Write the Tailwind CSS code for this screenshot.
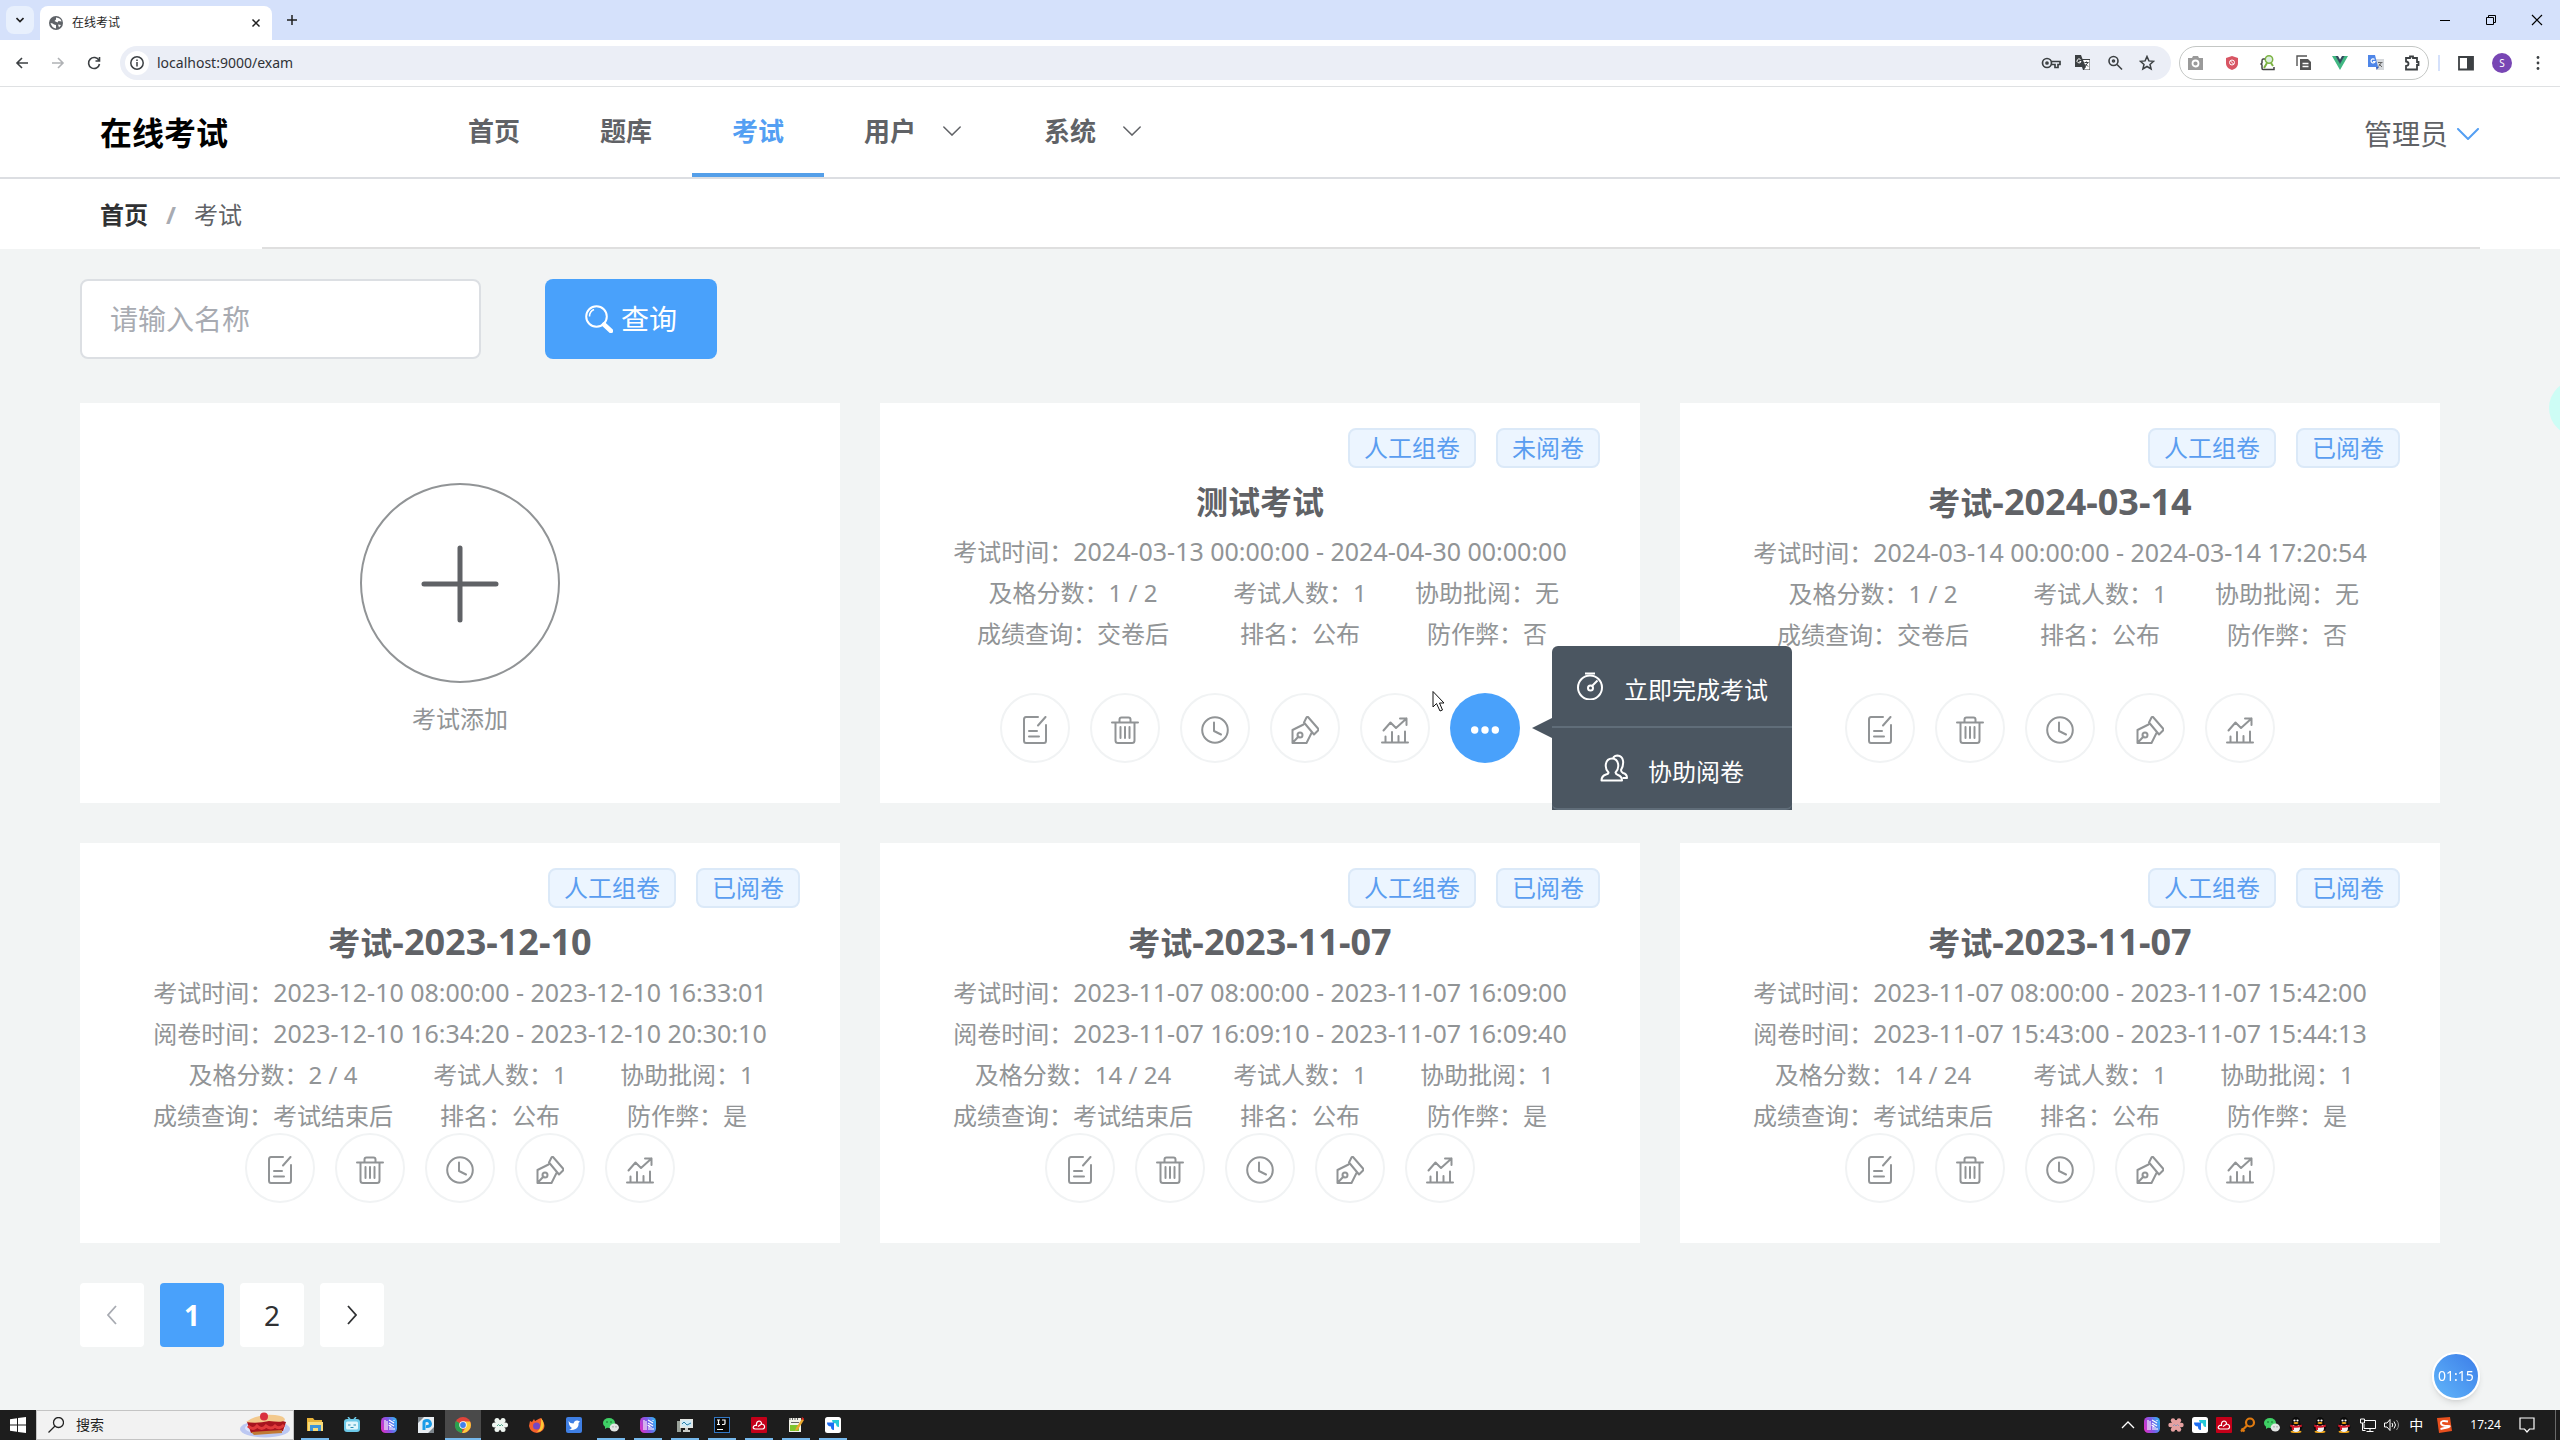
<!DOCTYPE html>
<html lang="zh-CN">
<head>
<meta charset="utf-8">
<title>在线考试</title>
<script src="https://cdn.jsdelivr.net/npm/@tailwindcss/browser@4"></script>
</head>
<body class="relative flex min-h-screen flex-col bg-[#f2f4f4] font-['Noto_Sans','Noto_Sans_CJK_SC',sans-serif] text-[#606266]">

<!-- shared icons -->
<svg class="absolute size-0" xmlns="http://www.w3.org/2000/svg" aria-hidden="true">
  <symbol id="i-edit" viewBox="0 0 28 28" fill="none" stroke="currentColor" stroke-width="2" stroke-linecap="round" stroke-linejoin="round"><path d="M17 1H5Q3 1 3 3.500V24.500Q3 27 5 27H23Q25 27 25 24.500V9"/><path d="M24.500 1L17 9.500M8 15h8M8 20.500h10" /></symbol>
  <symbol id="i-trash" viewBox="0 0 28 28" fill="none" stroke="currentColor" stroke-width="2" stroke-linecap="round" stroke-linejoin="round"><path d="M1 6.500h26M8.500 6V3.500Q8.500 1.500 10.500 1.500h7Q19.500 1.500 19.500 3.500V6M4.500 7V24.500Q4.500 27 7 27H21Q23.500 27 23.500 24.500V7M9.500 11v11M14 11v11M18.500 11v11"/></symbol>
  <symbol id="i-clock" viewBox="0 0 28 28" fill="none" stroke="currentColor" stroke-width="2" stroke-linecap="round" stroke-linejoin="round"><circle cx="14" cy="14" r="12.800"/><path d="M13 6.500V15L20 18.500"/></symbol>
  <symbol id="i-pen" viewBox="0 0 28 28" fill="none" stroke="currentColor" stroke-width="2" stroke-linecap="round" stroke-linejoin="round"><path d="M17 1L27 12.500Q27.500 13.500 27 14.500L23 18.500L13 6.500L15.500 1.500Q16.500 .5 17 1Z M12.500 8.500L1.500 14V27H15.500L20.500 17M1.500 27L7.500 20.500"/><circle cx="9" cy="19" r="2.500"/></symbol>
  <symbol id="i-chart" viewBox="0 0 28 28" fill="none" stroke="currentColor" stroke-width="2" stroke-linecap="round" stroke-linejoin="round"><path d="M1 26.500h26M4.500 26V20.500M11 26V16M17.500 26V20M24 26V15.500M2.500 14.500L9.500 6.500L15 12L25.500 2.500M19 2.500h6.500V9"/></symbol>
  <symbol id="i-down" viewBox="0 0 22 12" fill="none" stroke="currentColor" stroke-linecap="round"><path d="M1 1L11 11L21 1"/></symbol>
  <linearGradient id="gw" x1="0" y1=".6" x2="1" y2=".3"><stop offset="0" stop-color="#d633c8"/><stop offset=".5" stop-color="#7a5be8"/><stop offset="1" stop-color="#35b5f5"/></linearGradient>
  <symbol id="i-weave" viewBox="0 0 16 16"><rect width="16" height="16" rx="4.500" fill="url(#gw)"/><path d="M4 3v10M6 4v9M8 3l5 3M8 6l5 3M9 9v4M11 10v3M13 3v1M13 11v2M7.500 8l3 1.500" stroke="#fff" stroke-width="1.100"/></symbol>
  <symbol id="i-wechat" viewBox="0 0 16 16"><ellipse cx="6" cy="6" rx="6" ry="5" fill="#3fd065"/><path d="M2 9l0 3 3-2z" fill="#3fd065"/><ellipse cx="11.300" cy="10.500" rx="4.600" ry="4" fill="#e3e6e4"/><circle cx="4" cy="5" r=".8" fill="#14642c"/><circle cx="8" cy="5" r=".8" fill="#14642c"/><circle cx="10" cy="9.800" r=".6" fill="#777"/><circle cx="13" cy="9.800" r=".6" fill="#777"/></symbol>
  <symbol id="i-bird" viewBox="0 0 16 16"><rect width="16" height="16" rx="2.500" fill="#fff"/><path d="M7 3h7v7c-2 0-3-1-3-3.500C9 6.500 7 5.500 7 3z" fill="#25c9d8"/><path d="M2 5.500h7V13c-2.500 0-3-1.500-3-3.500C3.500 9.500 2 8 2 5.500z" fill="#1b6ef3"/></symbol>
  <symbol id="i-cloud" viewBox="0 0 16 16"><rect width="16" height="16" rx="1" fill="#c40019"/><path d="M4 12Q1.500 11.500 2.500 9.500Q3.500 8 5.500 8.500Q5 4.500 8 4Q10.500 4 10.500 7L7 9.500M10.500 7Q14 7.500 13.500 10.500Q13 12 11.500 12H4" fill="none" stroke="#fff" stroke-width="1.200"/></symbol>
  <symbol id="i-qq" viewBox="0 0 16 16"><ellipse cx="8" cy="14.800" rx="5.500" ry="1.200" fill="#f2a516"/><ellipse cx="8" cy="10" rx="6.500" ry="4.500" fill="#0b0b0b"/><ellipse cx="8" cy="11" rx="4" ry="4" fill="#f4f4f4"/><ellipse cx="8" cy="4.500" rx="4" ry="4.500" fill="#0b0b0b"/><circle cx="6.500" cy="3.500" r="1.100" fill="#fff"/><circle cx="9.500" cy="3.500" r="1.100" fill="#fff"/><ellipse cx="8" cy="6" rx="2.500" ry=".9" fill="#f2a516"/><path d="M2.500 7.500Q8 10 13.500 7.500L14 9.500Q8 12 2 9.500z M3.500 10h2.500v3h-2z" fill="#d3182a"/></symbol>
</svg>

<!-- browser frame -->
<div class="flex h-10 items-center bg-[#d5e1fb] px-1.5 text-[#1f1f1f]">
  <button class="grid size-7 place-items-center rounded-lg bg-[#e8f0fd]" aria-label="搜索标签页"><svg class="h-2 w-2" viewBox="0 0 8 8" fill="none" stroke="currentColor" stroke-width="1.600"><path d="M.5 2L4 5.500L7.500 2"/></svg></button>
  <div class="ml-1.5 flex h-[34px] w-58 items-center self-end rounded-t-lg bg-white px-2">
    <svg class="size-4" viewBox="0 0 16 16"><circle cx="8" cy="8" r="7" fill="#5f6368"/><path d="M2.500 8Q5 8 6 9.500L8 10v3.500Q4 13 2.500 8M8 2.500v2l-1.500 1.500 3 1.500 1-1.500 3 .5Q13 3 8 2.500M10 9.500l3 .5-2 2.500z" fill="#fff"/></svg>
    <span class="ml-2 flex-1 text-xs">在线考试</span>
    <button aria-label="关闭标签页"><svg class="size-4" viewBox="0 0 16 16" stroke="currentColor" stroke-width="1.500"><path d="M4.500 4.500l7 7M11.500 4.500l-7 7"/></svg></button>
  </div>
  <button class="ml-3" aria-label="新标签页"><svg class="size-4" viewBox="0 0 16 16" stroke="currentColor" stroke-width="1.500"><path d="M8 3v10M3 8h10"/></svg></button>
  <div class="ml-auto flex items-center gap-[30px] pr-[9px] text-black">
    <svg class="size-4" viewBox="0 0 16 16" stroke="currentColor"><path d="M3 8.500h10"/></svg>
    <svg class="size-4" viewBox="0 0 16 16" fill="none" stroke="currentColor"><path d="M3.500 5.500h7v7h-7zM5.500 5.500v-2h7v7h-2"/></svg>
    <svg class="size-4" viewBox="0 0 16 16" stroke="currentColor" stroke-width="1.200"><path d="M3 3l10 10M13 3L3 13"/></svg>
  </div>
</div>
<div class="flex h-[47px] items-center border-b border-[#dfe1e3] bg-white pr-3.5 pl-3.5 text-[#3c4043]">
  <svg class="size-4" viewBox="0 0 16 16" fill="none" stroke="currentColor" stroke-width="1.600"><path d="M14 8H3M8 3L3 8l5 5"/></svg>
  <svg class="ml-5 size-4 text-[#b0b2b5]" viewBox="0 0 16 16" fill="none" stroke="currentColor" stroke-width="1.600"><path d="M2 8h11M8 3l5 5-5 5"/></svg>
  <svg class="ml-5 size-4" viewBox="0 0 16 16" fill="none" stroke="currentColor" stroke-width="1.600"><path d="M13 5.500A5.500 5.500 0 1 0 13.500 9M13.500 2v4h-4"/></svg>
  <div class="ml-[18px] flex h-[34px] flex-1 items-center rounded-full bg-[#ebeef6] pr-4 pl-1">
    <div class="ml-px grid size-6 place-items-center rounded-full bg-white"><svg class="size-4" viewBox="0 0 16 16" fill="none" stroke="currentColor" stroke-width="1.500"><circle cx="8" cy="8" r="6.200"/><path d="M8 7v4.500M8 4.500V6"/></svg></div>
    <input type="text" value="localhost:9000/exam" aria-label="地址" class="ml-2 min-w-0 flex-1 bg-transparent text-sm text-[#303236] outline-none">
    <div class="flex items-center gap-4">
      <svg class="h-4 w-5 -mr-0.5" viewBox="0 0 20 16" fill="none" stroke="currentColor" stroke-width="1.700"><circle cx="6" cy="8" r="4.500"/><circle cx="6" cy="8" r="1"/><path d="M10.500 6.500H19v3h-2v3h-3v-3h-3.500"/></svg>
      <svg class="size-4" viewBox="0 0 16 16"><path d="M0 0h6l1.500 4H15v11H8l-1-3H0z" fill="#3c4043"/><path d="M8 5h6.500v9.500H9l2-2.500z" fill="#fff"/><path d="M9.500 7.500h4M11.500 6.500v1M13 7.500l-3 4M10.500 9l2.500 2.500" stroke="#3c4043" fill="none"/><path d="M5.500 4.500A2 2 0 1 0 6 6.500H4.500" stroke="#fff" fill="none"/></svg>
      <svg class="size-4" viewBox="0 0 16 16" fill="none" stroke="currentColor" stroke-width="1.600"><circle cx="6.500" cy="6" r="4.500"/><path d="M10 9.500l5 5"/><circle cx="6.500" cy="6" r="1"/></svg>
      <svg class="size-4" viewBox="0 0 16 16" fill="none" stroke="currentColor" stroke-width="1.500"><path d="M8 1.500l1.900 4.400 4.700.4-3.600 3.100 1.100 4.600L8 11.500 3.900 14 5 9.400 1.400 6.300l4.700-.4z"/></svg>
    </div>
  </div>
  <div class="ml-2 flex h-[34px] w-[250px] items-center gap-5 rounded-full border border-[#c4c7c5] px-2">
    <svg class="size-4" viewBox="0 0 16 16"><path d="M0 3h4l1-2h5l1 2h4v12H0z" fill="#9a9a9a"/><circle cx="7.500" cy="8.500" r="3" fill="none" stroke="#fff" stroke-width="1.800"/></svg>
    <svg class="size-4" viewBox="0 0 16 16"><path d="M8 1l6 2v5c0 4-3 6-6 7-3-1-6-3-6-7V3z" fill="#d85563"/><circle cx="8" cy="7.500" r="2.500" fill="none" stroke="#fff"/><path d="M6.500 6l3 3" stroke="#fff"/></svg>
    <svg class="size-4" viewBox="0 0 16 16" fill="none" stroke-width="1.500"><path d="M5 4H3Q2 4 2 6v2L1 9l1 1v3q0 1.500 1 1.500h11V12" stroke="#444"/><circle cx="9" cy="4.500" r="3.700" fill="#dceee0" stroke="#7cb342"/><path d="M7 8l-3 5M11 8l2 3" stroke="#7cb342" stroke-width="2"/></svg>
    <svg class="size-4" viewBox="0 0 16 16"><path d="M1 11V1h10" fill="none" stroke="#555" stroke-width="1.400"/><path d="M4 4h8l3 3v8H4z" fill="#555"/><path d="M6.500 8.500h6M6.500 11.500h6" stroke="#fff" stroke-width="1.300"/></svg>
    <svg class="size-4" viewBox="0 0 16 16"><path d="M0 1h4l4 7 4-7h4L8 15z" fill="#41b883"/><path d="M3.500 1H6l2 3.500L10 1h2.500L8 9z" fill="#34495e"/></svg>
    <svg class="size-4" viewBox="0 0 16 16"><path d="M7 4h9v11H9z" fill="#d5d8dc"/><path d="M0 0h7l3 12H0z" fill="#4f86e8"/><path d="M8 12h3l-2.500 3z" fill="#3b5fb5"/><path d="M6.500 4.500A2 2 0 1 0 7 6.500H5" stroke="#fff" fill="none" stroke-width="1.200"/><path d="M10 7.500h4.500M13.500 7.500l-3 4M11 9l3 3" stroke="#666" fill="none"/></svg>
    <svg class="size-4" viewBox="0 0 16 16" fill="none" stroke="#3c4043" stroke-width="1.800"><path d="M2 3h4V1.500h3V3h4v4h1.500v3H13v4.500H2V11q2.500-.3 2.500-2.300T2 6.500z"/></svg>
  </div>
  <span class="ml-[9px] h-4 w-0.5 bg-[#d5e1fb]"></span>
  <svg class="ml-[18px] size-4" viewBox="0 0 16 16"><path d="M1 2h14v12.500H1z" fill="none" stroke="#3c4043" stroke-width="1.800"/><path d="M9 2h6v12H9z" fill="#3c4043"/></svg>
  <span class="ml-[18px] grid size-5 place-items-center rounded-full bg-[#7846b4] text-[10px] text-white">S</span>
  <svg class="ml-[18px] size-4" viewBox="0 0 16 16" fill="currentColor"><circle cx="8" cy="2.500" r="1.400"/><circle cx="8" cy="8" r="1.400"/><circle cx="8" cy="13.500" r="1.400"/></svg>
</div>

<!-- site header -->
<header class="flex h-[92px] items-stretch border-b-2 border-[#dcdee2] bg-white pr-20 pl-[100px]">
  <h1 class="self-center pt-0.5 text-[32px] font-bold text-black">在线考试</h1>
  <nav class="ml-50 flex text-[26px] font-bold">
    <a href="#" class="flex items-center border-b-4 border-transparent px-10 pt-0.5">首页</a>
    <a href="#" class="flex items-center border-b-4 border-transparent px-10 pt-0.5">题库</a>
    <a href="#" class="flex items-center border-b-4 border-[#549fe9] px-10 pt-0.5 text-[#549ff3]">考试</a>
    <a href="#" class="flex w-45 items-center border-b-4 border-transparent pt-0.5 pl-10">用户<svg class="ml-[27px] h-2.5 w-[18px]" stroke-width="1.800"><use href="#i-down"/></svg></a>
    <a href="#" class="flex w-45 items-center border-b-4 border-transparent pt-0.5 pl-10">系统<svg class="ml-[27px] h-2.5 w-[18px]" stroke-width="1.800"><use href="#i-down"/></svg></a>
  </nav>
  <button class="ml-auto flex items-center gap-2 pt-1 text-[28px]">管理员<svg class="h-3 w-6 text-[#549ff3]" stroke-width="2"><use href="#i-down"/></svg></button>
</header>
<div class="flex h-[70px] items-stretch bg-white pr-20 pl-[100px] text-2xl">
  <nav class="flex items-center gap-[18px] pt-0.5" aria-label="面包屑"><a href="#" class="font-bold text-[#303133]">首页</a><span class="font-bold text-[#a8abb2]">/</span><span>考试</span></nav>
  <div class="ml-5 flex-1 border-b-2 border-[#dfdfdf]"></div>
</div>

<main class="flex-1 pt-[30px] pr-20 pb-10 pl-20">
  <form class="flex">
    <input type="text" placeholder="请输入名称" aria-label="名称" class="h-20 w-[401px] rounded-lg border-2 border-[#dcdfe3] bg-white px-7 text-[28px] placeholder:text-[#a8abb2]">
    <button type="button" class="ml-16 flex h-20 w-[172px] items-center justify-center gap-2 rounded-lg bg-[#49a1fb] text-[28px] text-white"><svg class="size-7" viewBox="0 0 28 28" fill="none" stroke="currentColor"><circle cx="11.500" cy="11.500" r="10.300" stroke-width="2"/><path d="M4.500 11.500A7.500 7.500 0 0 1 9 4.500" stroke-width="1.500"/><path d="M19 19.500L26 26" stroke-width="4.500" stroke-linecap="round"/></svg>查询</button>
  </form>

  <div class="mt-11 mr-10 grid grid-cols-3 gap-10 text-2xl text-[#919496]">
    <section class="flex h-[400px] flex-col items-center bg-white pt-20">
      <button class="grid size-50 place-items-center rounded-full border-2 border-[#919496] text-[#606266]" aria-label="考试添加"><svg class="size-20" viewBox="0 0 80 80" stroke="currentColor" stroke-width="5" stroke-linecap="round"><path d="M40 5v72M4 41h72"/></svg></button>
      <p class="mt-5">考试添加</p>
    </section>

    <section class="relative flex h-[400px] flex-col bg-white px-10 pt-[25px] pb-10">
      <div class="flex h-10 justify-end gap-5 text-[#5a9df0]"><span class="flex items-center rounded-lg border-2 border-[#dbe9f8] bg-[#ecf5ff] px-3.5">人工组卷</span><span class="flex items-center rounded-lg border-2 border-[#dbe9f8] bg-[#ecf5ff] px-3.5">未阅卷</span></div>
      <h2 class="mt-2.5 text-center text-[32px] leading-[48px] font-bold text-[#606266]">测试考试</h2>
      <div class="mt-[5px] min-h-0 flex-1 text-center leading-[41px]">
        <p class="whitespace-nowrap">考试时间：<time class="text-[25px]">2024-03-13 00:00:00 - 2024-04-30 00:00:00</time></p>
        <div class="grid grid-cols-[306fr_148fr_226fr] whitespace-nowrap"><span>及格分数：1 / 2</span><span>考试人数：1</span><span>协助批阅：无</span><span>成绩查询：交卷后</span><span>排名：公布</span><span>防作弊：否</span></div>
      </div>
      <div class="flex justify-center gap-5">
        <button class="grid size-[70px] place-items-center rounded-full border-2 border-[#f1f3f4] bg-white pt-1" aria-label="修改"><svg class="size-7"><use href="#i-edit"/></svg></button>
        <button class="grid size-[70px] place-items-center rounded-full border-2 border-[#f1f3f4] bg-white pt-1" aria-label="删除"><svg class="size-7"><use href="#i-trash"/></svg></button>
        <button class="grid size-[70px] place-items-center rounded-full border-2 border-[#f1f3f4] bg-white pt-1" aria-label="时间"><svg class="size-7"><use href="#i-clock"/></svg></button>
        <button class="grid size-[70px] place-items-center rounded-full border-2 border-[#f1f3f4] bg-white pt-1" aria-label="阅卷"><svg class="size-7"><use href="#i-pen"/></svg></button>
        <button class="grid size-[70px] place-items-center rounded-full border-2 border-[#f1f3f4] bg-white pt-1" aria-label="统计"><svg class="size-7"><use href="#i-chart"/></svg></button>
        <div class="relative">
          <button class="grid size-[70px] place-items-center rounded-full bg-[#49a1fb] pt-1 text-white" aria-label="更多"><svg class="size-7" viewBox="0 0 28 28" fill="currentColor"><circle cx="3.700" cy="14" r="3.700"/><circle cx="14" cy="14" r="3.700"/><circle cx="24.300" cy="14" r="3.700"/></svg></button>
          <div class="absolute -top-[47px] left-[102px] z-10 w-60 rounded-t-md bg-[#4b5661] text-white">
            <svg class="absolute top-[72px] -left-5 h-5 w-5" viewBox="0 0 20 20" fill="#4b5661"><path d="M20 0L0 10l20 10z"/></svg>
            <button class="flex h-[82px] w-full items-center justify-center gap-5 border-b-2 border-[#606d79] pt-2"><svg class="-mt-2 size-7" viewBox="0 0 28 28" fill="none" stroke="currentColor" stroke-width="2"><path d="M9 1.500h10"/><circle cx="14" cy="15.500" r="12"/><circle cx="14.500" cy="16" r="2.500"/><path d="M16 14l5.500-5.500"/></svg>立即完成考试</button>
            <button class="flex h-[82px] w-full items-center justify-center gap-5 rounded-b-md border-b-2 border-[#606d79] pt-2"><svg class="-mt-2 size-7" viewBox="0 0 28 28" fill="none" stroke="currentColor" stroke-width="2" stroke-linejoin="round"><path d="M8.500 18.500C4 14 5 4.500 12 4.500S20 14 15.500 18.500Q15.500 20 18 21Q22 22.500 22 26.500H1.500Q1.500 22 6 20.500Q8.500 20 8.500 18.500Z"/><path d="M13 4Q14.500 1.500 17.500 1.500C24 2 24.500 10 21 16Q21 18 23 19Q27 20 27 24H22.500"/></svg>协助阅卷</button>
          </div>
        </div>
      </div>
      <svg class="absolute top-[287px] left-[552px] h-[22px] w-[13px]" viewBox="0 0 13 22" fill="#fff" stroke="#111"><path d="M1 1.500V17l3.500-3.500L8 21l2.500-1L7.500 13H12z"/></svg>
    </section>

    <section class="flex h-[400px] flex-col bg-white px-10 pt-[25px] pb-10">
      <div class="flex h-10 justify-end gap-5 text-[#5a9df0]"><span class="flex items-center rounded-lg border-2 border-[#dbe9f8] bg-[#ecf5ff] px-3.5">人工组卷</span><span class="flex items-center rounded-lg border-2 border-[#dbe9f8] bg-[#ecf5ff] px-3.5">已阅卷</span></div>
      <h2 class="mt-2.5 text-center text-[32px] leading-[48px] font-bold text-[#606266]">考试<span class="text-[36px]">-2024-03-14</span></h2>
      <div class="mt-[5px] min-h-0 flex-1 text-center leading-[41px]">
        <p class="whitespace-nowrap">考试时间：<time class="text-[25px]">2024-03-14 00:00:00 - 2024-03-14 17:20:54</time></p>
        <div class="grid grid-cols-[306fr_148fr_226fr] whitespace-nowrap"><span>及格分数：1 / 2</span><span>考试人数：1</span><span>协助批阅：无</span><span>成绩查询：交卷后</span><span>排名：公布</span><span>防作弊：否</span></div>
      </div>
      <div class="flex justify-center gap-5">
        <button class="grid size-[70px] place-items-center rounded-full border-2 border-[#f1f3f4] bg-white pt-1" aria-label="修改"><svg class="size-7"><use href="#i-edit"/></svg></button>
        <button class="grid size-[70px] place-items-center rounded-full border-2 border-[#f1f3f4] bg-white pt-1" aria-label="删除"><svg class="size-7"><use href="#i-trash"/></svg></button>
        <button class="grid size-[70px] place-items-center rounded-full border-2 border-[#f1f3f4] bg-white pt-1" aria-label="时间"><svg class="size-7"><use href="#i-clock"/></svg></button>
        <button class="grid size-[70px] place-items-center rounded-full border-2 border-[#f1f3f4] bg-white pt-1" aria-label="阅卷"><svg class="size-7"><use href="#i-pen"/></svg></button>
        <button class="grid size-[70px] place-items-center rounded-full border-2 border-[#f1f3f4] bg-white pt-1" aria-label="统计"><svg class="size-7"><use href="#i-chart"/></svg></button>
      </div>
    </section>

    <section class="flex h-[400px] flex-col bg-white px-10 pt-[25px] pb-10">
      <div class="flex h-10 justify-end gap-5 text-[#5a9df0]"><span class="flex items-center rounded-lg border-2 border-[#dbe9f8] bg-[#ecf5ff] px-3.5">人工组卷</span><span class="flex items-center rounded-lg border-2 border-[#dbe9f8] bg-[#ecf5ff] px-3.5">已阅卷</span></div>
      <h2 class="mt-2.5 text-center text-[32px] leading-[48px] font-bold text-[#606266]">考试<span class="text-[36px]">-2023-12-10</span></h2>
      <div class="mt-[5px] min-h-0 flex-1 text-center leading-[41px]">
        <p class="whitespace-nowrap">考试时间：<time class="text-[25px]">2023-12-10 08:00:00 - 2023-12-10 16:33:01</time></p>
        <p class="whitespace-nowrap">阅卷时间：<time class="text-[25px]">2023-12-10 16:34:20 - 2023-12-10 20:30:10</time></p>
        <div class="grid grid-cols-[306fr_148fr_226fr] whitespace-nowrap"><span>及格分数：2 / 4</span><span>考试人数：1</span><span>协助批阅：1</span><span>成绩查询：考试结束后</span><span>排名：公布</span><span>防作弊：是</span></div>
      </div>
      <div class="flex justify-center gap-5">
        <button class="grid size-[70px] place-items-center rounded-full border-2 border-[#f1f3f4] bg-white pt-1" aria-label="修改"><svg class="size-7"><use href="#i-edit"/></svg></button>
        <button class="grid size-[70px] place-items-center rounded-full border-2 border-[#f1f3f4] bg-white pt-1" aria-label="删除"><svg class="size-7"><use href="#i-trash"/></svg></button>
        <button class="grid size-[70px] place-items-center rounded-full border-2 border-[#f1f3f4] bg-white pt-1" aria-label="时间"><svg class="size-7"><use href="#i-clock"/></svg></button>
        <button class="grid size-[70px] place-items-center rounded-full border-2 border-[#f1f3f4] bg-white pt-1" aria-label="阅卷"><svg class="size-7"><use href="#i-pen"/></svg></button>
        <button class="grid size-[70px] place-items-center rounded-full border-2 border-[#f1f3f4] bg-white pt-1" aria-label="统计"><svg class="size-7"><use href="#i-chart"/></svg></button>
      </div>
    </section>

    <section class="flex h-[400px] flex-col bg-white px-10 pt-[25px] pb-10">
      <div class="flex h-10 justify-end gap-5 text-[#5a9df0]"><span class="flex items-center rounded-lg border-2 border-[#dbe9f8] bg-[#ecf5ff] px-3.5">人工组卷</span><span class="flex items-center rounded-lg border-2 border-[#dbe9f8] bg-[#ecf5ff] px-3.5">已阅卷</span></div>
      <h2 class="mt-2.5 text-center text-[32px] leading-[48px] font-bold text-[#606266]">考试<span class="text-[36px]">-2023-11-07</span></h2>
      <div class="mt-[5px] min-h-0 flex-1 text-center leading-[41px]">
        <p class="whitespace-nowrap">考试时间：<time class="text-[25px]">2023-11-07 08:00:00 - 2023-11-07 16:09:00</time></p>
        <p class="whitespace-nowrap">阅卷时间：<time class="text-[25px]">2023-11-07 16:09:10 - 2023-11-07 16:09:40</time></p>
        <div class="grid grid-cols-[306fr_148fr_226fr] whitespace-nowrap"><span>及格分数：14 / 24</span><span>考试人数：1</span><span>协助批阅：1</span><span>成绩查询：考试结束后</span><span>排名：公布</span><span>防作弊：是</span></div>
      </div>
      <div class="flex justify-center gap-5">
        <button class="grid size-[70px] place-items-center rounded-full border-2 border-[#f1f3f4] bg-white pt-1" aria-label="修改"><svg class="size-7"><use href="#i-edit"/></svg></button>
        <button class="grid size-[70px] place-items-center rounded-full border-2 border-[#f1f3f4] bg-white pt-1" aria-label="删除"><svg class="size-7"><use href="#i-trash"/></svg></button>
        <button class="grid size-[70px] place-items-center rounded-full border-2 border-[#f1f3f4] bg-white pt-1" aria-label="时间"><svg class="size-7"><use href="#i-clock"/></svg></button>
        <button class="grid size-[70px] place-items-center rounded-full border-2 border-[#f1f3f4] bg-white pt-1" aria-label="阅卷"><svg class="size-7"><use href="#i-pen"/></svg></button>
        <button class="grid size-[70px] place-items-center rounded-full border-2 border-[#f1f3f4] bg-white pt-1" aria-label="统计"><svg class="size-7"><use href="#i-chart"/></svg></button>
      </div>
    </section>

    <section class="flex h-[400px] flex-col bg-white px-10 pt-[25px] pb-10">
      <div class="flex h-10 justify-end gap-5 text-[#5a9df0]"><span class="flex items-center rounded-lg border-2 border-[#dbe9f8] bg-[#ecf5ff] px-3.5">人工组卷</span><span class="flex items-center rounded-lg border-2 border-[#dbe9f8] bg-[#ecf5ff] px-3.5">已阅卷</span></div>
      <h2 class="mt-2.5 text-center text-[32px] leading-[48px] font-bold text-[#606266]">考试<span class="text-[36px]">-2023-11-07</span></h2>
      <div class="mt-[5px] min-h-0 flex-1 text-center leading-[41px]">
        <p class="whitespace-nowrap">考试时间：<time class="text-[25px]">2023-11-07 08:00:00 - 2023-11-07 15:42:00</time></p>
        <p class="whitespace-nowrap">阅卷时间：<time class="text-[25px]">2023-11-07 15:43:00 - 2023-11-07 15:44:13</time></p>
        <div class="grid grid-cols-[306fr_148fr_226fr] whitespace-nowrap"><span>及格分数：14 / 24</span><span>考试人数：1</span><span>协助批阅：1</span><span>成绩查询：考试结束后</span><span>排名：公布</span><span>防作弊：是</span></div>
      </div>
      <div class="flex justify-center gap-5">
        <button class="grid size-[70px] place-items-center rounded-full border-2 border-[#f1f3f4] bg-white pt-1" aria-label="修改"><svg class="size-7"><use href="#i-edit"/></svg></button>
        <button class="grid size-[70px] place-items-center rounded-full border-2 border-[#f1f3f4] bg-white pt-1" aria-label="删除"><svg class="size-7"><use href="#i-trash"/></svg></button>
        <button class="grid size-[70px] place-items-center rounded-full border-2 border-[#f1f3f4] bg-white pt-1" aria-label="时间"><svg class="size-7"><use href="#i-clock"/></svg></button>
        <button class="grid size-[70px] place-items-center rounded-full border-2 border-[#f1f3f4] bg-white pt-1" aria-label="阅卷"><svg class="size-7"><use href="#i-pen"/></svg></button>
        <button class="grid size-[70px] place-items-center rounded-full border-2 border-[#f1f3f4] bg-white pt-1" aria-label="统计"><svg class="size-7"><use href="#i-chart"/></svg></button>
      </div>
    </section>
  </div>

  <nav class="mt-10 flex gap-4 text-[28px] text-[#303133]" aria-label="分页">
    <button class="grid size-16 place-items-center rounded bg-white text-[#a8abb2]" aria-label="上一页"><svg class="h-5 w-2.5" viewBox="0 0 10 20" fill="none" stroke="currentColor" stroke-width="1.800"><path d="M9 1L1 10l8 9"/></svg></button>
    <button class="size-16 rounded bg-[#49a1fb] font-bold text-white">1</button>
    <button class="size-16 rounded bg-white">2</button>
    <button class="grid size-16 place-items-center rounded bg-white" aria-label="下一页"><svg class="h-5 w-2.5" viewBox="0 0 10 20" fill="none" stroke="currentColor" stroke-width="1.800"><path d="M1 1l8 9-8 9"/></svg></button>
  </nav>
</main>

<!-- floating desktop widgets -->
<div class="absolute top-[380px] right-0 h-14 w-[11px] overflow-hidden"><div class="size-14 rounded-full bg-[#cdfdf5]"></div></div>
<div class="fixed right-20 bottom-10 grid size-12 place-items-center rounded-full border-2 border-white bg-linear-to-bl from-[#3d7de8] to-[#62b6fa] text-sm text-white shadow-md">01:15</div>

<!-- taskbar -->
<footer class="flex h-[30px] items-stretch bg-[#1d1d1d] text-white">
  <button class="grid w-9 place-items-center" aria-label="开始"><svg class="size-4" viewBox="0 0 16 16" fill="#fff"><path d="M0 2.200L7 1.200V7.500H0zM8 1L16 0V7.500H8zM0 8.500H7V14.800L0 13.800zM8 8.500h8V16L8 15z"/></svg></button>
  <div class="flex w-[258px] items-center border border-[#c4c4c4] bg-[#f2f2f2] pr-0.5 pl-[11px] text-[#222]">
    <svg class="size-4" viewBox="0 0 16 16" fill="none" stroke="currentColor" stroke-width="1.300"><circle cx="10.500" cy="5.500" r="5"/><path d="M7 9l-6.500 6.500"/></svg>
    <input type="search" placeholder="搜索" aria-label="搜索" class="ml-3 min-w-0 flex-1 bg-transparent text-sm placeholder:text-[#222]">
    <svg class="h-[26px] w-[52px]" viewBox="0 0 52 26"><ellipse cx="26" cy="17" rx="25" ry="8.500" fill="#bcc8f2"/><ellipse cx="26" cy="16" rx="20" ry="6" fill="#dde4fb"/><path d="M8 10L30 5 47 10 44 19 12 21z" fill="#a8141e"/><path d="M9 14q5 5 9 0q5 5 9 0q5 4 9 0q4 4 9-1" stroke="#e03a3a" stroke-width="3" fill="none"/><path d="M7 10Q20 1 36 3Q46 4 46 8Q44 11 30 9Q18 12 7 10z" fill="#f3c98d"/><path d="M12 20l31-2v3l-28 2z" fill="#c07a35"/><circle cx="25" cy="4.500" r="4" fill="#d9303e"/></svg>
  </div>
  <div class="ml-[3px] flex gap-px">
    <span class="grid w-9 place-items-center bg-[linear-gradient(#76b9ed,#76b9ed)] bg-[length:28px_2px] bg-bottom bg-no-repeat"><svg class="size-4" viewBox="0 0 16 16"><path d="M0 1h6l1.500 2H15v11H0z" fill="#e8b33a"/><path d="M1 5h15v9H1z" fill="#f9dc7a"/><path d="M3 8h11v6h-3v-3H6v3H3z" fill="#3e95d8"/></svg></span>
    <span class="grid w-9 place-items-center"><svg class="size-4" viewBox="0 0 16 16"><path d="M4 0l2.500 3M12 0L9.500 3" stroke="#6cc9e8" stroke-width="1.500"/><rect y="2" width="16" height="13" rx="3" fill="#6cc9e8"/><rect x="2" y="4.500" width="12" height="8" rx="1.500" fill="#dff6fc"/><path d="M4 8h2.500M9.500 8H12M6.500 10.500h3" stroke="#2a8fb5" stroke-width="1.200"/></svg></span>
    <span class="grid w-9 place-items-center"><svg class="size-4"><use href="#i-weave"/></svg></span>
    <span class="grid w-9 place-items-center"><svg class="size-4" viewBox="0 0 16 16"><rect width="16" height="16" fill="#e9eef2"/><path d="M0 0h6L0 6zM16 16h-6l6-6z" fill="#7d868c"/><path d="M6 13V5.500Q6 3.500 9 3.500T12.500 7Q12 10 8 9.500" fill="none" stroke="#1b9de8" stroke-width="3"/></svg></span>
    <span class="grid w-9 place-items-center bg-[linear-gradient(#76b9ed,#76b9ed)] bg-[length:36px_2px] bg-bottom bg-[#4a4a4a] bg-no-repeat"><svg class="size-4" viewBox="0 0 16 16"><circle cx="8" cy="8" r="8" fill="#e0443a"/><path d="M1 4L8 8l-1 8A8 8 0 0 1 1 4z" fill="#2aa04f"/><path d="M15 4.500H8.500L11 10 7 16A8 8 0 0 0 15 4.500z" fill="#f9cb3c"/><circle cx="8" cy="8" r="3.700" fill="#fff"/><circle cx="8" cy="8" r="2.900" fill="#4181ec"/></svg></span>
    <span class="grid w-9 place-items-center"><svg class="size-4" viewBox="0 0 16 16" fill="#eef5f0"><circle cx="8" cy="8" r="5"/><circle cx="5" cy="3.500" r="2.500"/><circle cx="11" cy="3.500" r="2.500"/><circle cx="13.500" cy="8" r="2.500"/><circle cx="11" cy="12.500" r="2.500"/><circle cx="5" cy="12.500" r="2.500"/><circle cx="2.500" cy="8" r="2.500"/><path d="M5 9q1.500-3 3 0q1.500-3 3 0" stroke="#4fa78a" fill="none"/></svg></span>
    <span class="grid w-9 place-items-center"><svg class="size-4" viewBox="0 0 16 16"><path d="M1 4l2 1 2-3 1 2Q11 1 12 1l2 3Q17 9 14 13Q11 16 8 16Q1 15 0 9z" fill="#f5612c"/><path d="M12 1q5 6 1 12-2 2-5 2 5-4 4-14z" fill="#fcc936"/><circle cx="7.500" cy="9" r="3.500" fill="#7548c4"/></svg></span>
    <span class="grid w-9 place-items-center"><svg class="size-4" viewBox="0 0 16 16"><rect width="16" height="16" rx="2" fill="#3f7fe4"/><path d="M2.500 4Q4 6.500 7.500 6.500Q8.500 3 11.500 3.500L14 4.500 12.500 6Q13 10 9.500 12Q6 13.500 3 12.500Q5 12 6 11Q3 9.500 2.500 4z" fill="#fff"/></svg></span>
    <span class="grid w-9 place-items-center bg-[linear-gradient(#76b9ed,#76b9ed)] bg-[length:28px_2px] bg-bottom bg-no-repeat"><svg class="size-4"><use href="#i-wechat"/></svg></span>
    <span class="grid w-9 place-items-center bg-[linear-gradient(#76b9ed,#76b9ed)] bg-[length:28px_2px] bg-bottom bg-no-repeat"><svg class="size-4"><use href="#i-weave"/></svg></span>
    <span class="grid w-9 place-items-center bg-[linear-gradient(#76b9ed,#76b9ed)] bg-[length:28px_2px] bg-bottom bg-no-repeat"><svg class="size-4" viewBox="0 0 16 16"><path d="M0 4h4v11H0z" fill="#9aa29a"/><rect x="3" y="2" width="13" height="9" fill="#e4e6e2"/><rect x="4.500" y="3.500" width="10" height="6" fill="#cdeaf7"/><path d="M5 7l2-2 3 3 4-2" stroke="#2b7fa8" fill="none"/><path d="M8 11h3v2h2v2H6v-2h2z" fill="#c9cbc7"/></svg></span>
    <span class="grid w-9 place-items-center bg-[linear-gradient(#76b9ed,#76b9ed)] bg-[length:28px_2px] bg-bottom bg-no-repeat"><svg class="size-4" viewBox="0 0 16 16"><rect x=".5" y=".5" width="15" height="15" fill="#0a0a0a" stroke="#3277c4"/><path d="M3 3h3M4.500 3v4.500M3 7.500h3M8 3h3v3.500q0 1-1.500 1H8M3 12.500h6" stroke="#fff" fill="none" stroke-width="1.200"/></svg></span>
    <span class="grid w-9 place-items-center bg-[linear-gradient(#76b9ed,#76b9ed)] bg-[length:28px_2px] bg-bottom bg-no-repeat"><svg class="size-4"><use href="#i-cloud"/></svg></span>
    <span class="grid w-9 place-items-center bg-[linear-gradient(#76b9ed,#76b9ed)] bg-[length:28px_2px] bg-bottom bg-no-repeat"><svg class="size-4" viewBox="0 0 16 16"><path d="M1 1h12v14H1z" fill="#f3f3ea"/><path d="M2 8h9v6H2z" fill="#7fc52e"/><path d="M2 1v2M4.500 1v2M7 1v2M9.500 1v2M3 5.500h8" stroke="#666"/><path d="M14.500 1L8 11l-1 3 3-1.500L16 3z" fill="#e8a72e"/><path d="M14 0l2 1.500v2L13.500 2z" fill="#c22"/></svg></span>
    <span class="grid w-9 place-items-center bg-[linear-gradient(#76b9ed,#76b9ed)] bg-[length:28px_2px] bg-bottom bg-no-repeat"><svg class="size-4"><use href="#i-bird"/></svg></span>
  </div>
  <div class="ml-auto flex items-center gap-2">
    <svg class="size-4" viewBox="0 0 16 16" fill="none" stroke="#fff" stroke-width="1.300"><path d="M2 11l6-6 6 6"/></svg>
    <svg class="size-4"><use href="#i-weave"/></svg>
    <svg class="size-4" viewBox="0 0 16 16" fill="#e5a0a0"><circle cx="8" cy="8" r="5"/><circle cx="5" cy="3.500" r="2.200"/><circle cx="11" cy="3.500" r="2.200"/><circle cx="13.500" cy="8" r="2.200"/><circle cx="11" cy="12.500" r="2.200"/><circle cx="5" cy="12.500" r="2.200"/><circle cx="2.500" cy="8" r="2.200"/><path d="M5 9q1.500-3 3 0q1.500-3 3 0" stroke="#8b98b8" fill="none"/></svg>
    <svg class="size-4"><use href="#i-bird"/></svg>
    <svg class="size-4"><use href="#i-cloud"/></svg>
    <svg class="size-4" viewBox="0 0 16 16" fill="none" stroke="#e07a10" stroke-width="2.200"><circle cx="10" cy="5.500" r="4"/><path d="M7 8.500L1 14.500M1.500 11.500l3 3"/></svg>
    <svg class="size-4"><use href="#i-wechat"/></svg>
    <svg class="size-4"><use href="#i-qq"/></svg>
    <svg class="size-4"><use href="#i-qq"/></svg>
    <svg class="size-4"><use href="#i-qq"/></svg>
    <svg class="size-4" viewBox="0 0 16 16" fill="none" stroke="#fff"><path d="M5 3.500h10.500v8H4V7M10 11.500V14M6.500 14.500h7M.5 2h4v4h-4zM2.500 6v7.500h3"/></svg>
    <svg class="size-4" viewBox="0 0 16 16" fill="none" stroke="#fff"><path d="M.5 6H3l3-3.500v11L3 10H.5zM8 6q1.500 2 0 4M10 4.500q3 3.500 0 7"/><path d="M12.500 3q4 5 0 10" stroke="#999"/></svg>
    <span class="w-4 text-center text-sm">中</span>
    <svg class="ml-1 size-4" viewBox="0 0 16 16"><path d="M1 1l13-1 2 14-13 2z" fill="#e8501e"/><path d="M12 4.500Q5 3 5 6t6.500 3-7 3" fill="none" stroke="#fff" stroke-width="2"/></svg>
    <span class="ml-2.5 text-xs">17:24</span>
    <svg class="ml-2.5 size-4" viewBox="0 0 16 16" fill="none" stroke="#fff" stroke-width="1.200"><path d="M1 1h14v11H10.500L8 15l-2.500-3H1z"/></svg>
    <span class="mr-1 ml-3 h-[30px] w-px bg-[#6a6a6a]"></span>
  </div>
</footer>
</body>
</html>
